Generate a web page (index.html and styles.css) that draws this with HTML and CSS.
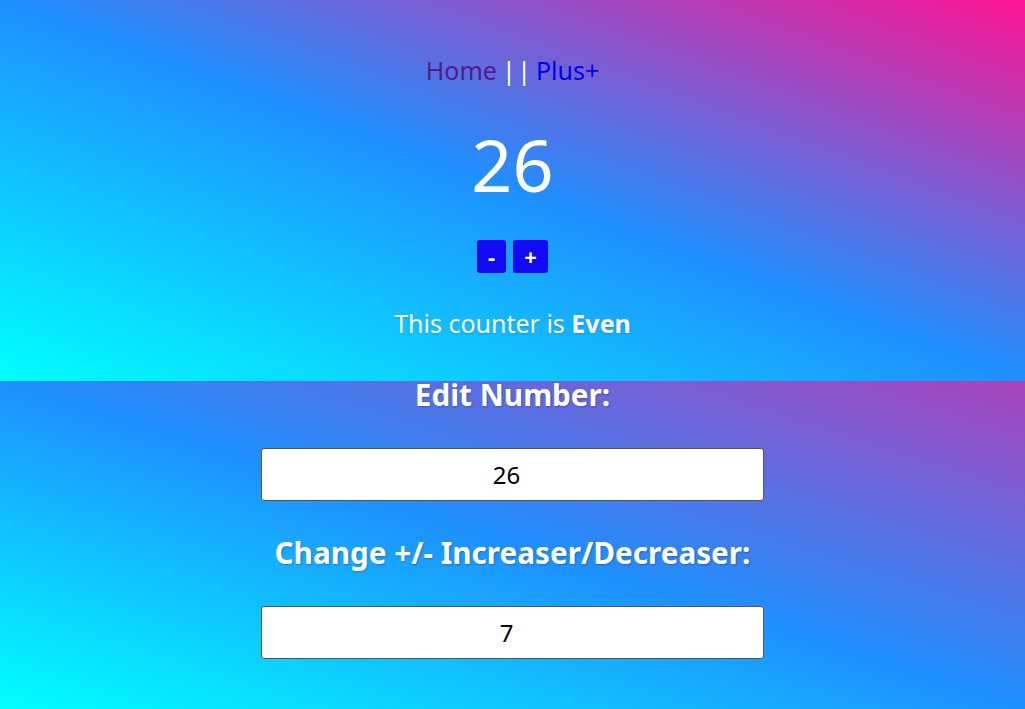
FILE: index.html
```html
<!DOCTYPE html>
<html lang="en">
<head>
<meta charset="utf-8">
<title>Counter</title>
<link rel="stylesheet" href="styles.css">
</head>
<body>
  <div class="app">
    <nav class="nav">
      <a class="nav-link visited" href="#">Home</a>
      <span class="sep"><span>|</span><span>|</span></span>
      <a class="nav-link" href="#">Plus+</a>
    </nav>
    <div class="count">26</div>
    <div class="buttons">
      <button class="btn minus">-</button>
      <button class="btn plus">+</button>
    </div>
    <p class="parity">This counter is <b>Even</b></p>
    <h2 class="label">Edit Number:</h2>
    <input class="field" type="text" value="26">
    <h2 class="label label-second">Change +/- Increaser/Decreaser:</h2>
    <input class="field" type="text" value="7">
  </div>
</body>
</html>
```

FILE: styles.css
```css
html, body {
  margin: 0;
  padding: 0;
}

body {
  height: 709px;
  font-family: "Noto Sans", "Open Sans", sans-serif;
  color: #ffffff;
  background-color: #1e90ff;
  background-image:
    linear-gradient(to top right, #00ffff 0%, #1e90ff 50%, #ff1493 100%),
    linear-gradient(to top right, #00ffff 0%, #1e90ff 50%, #ff1493 130%);
  background-repeat: no-repeat, no-repeat;
  background-size: 100% 381px, 100% 328px;
  background-position: 0 0, 0 381px;
}

.app {
  display: flex;
  flex-direction: column;
  align-items: center;
  padding-top: 54px;
}

.nav {
  font-size: 25px;
  line-height: 32px;
  height: 32px;
  display: flex;
  gap: 5px;
}

.nav-link {
  color: #0000ee;
  text-decoration: none;
}

.nav-link.visited {
  color: #551a8b;
}

.sep {
  display: flex;
  gap: 1.5px;
  color: #ffffff;
}

.count {
  margin-top: 30px;
  font-size: 72px;
  line-height: 96px;
  height: 96px;
}

.buttons {
  margin-top: 28px;
  display: flex;
  gap: 7px;
}

.btn {
  height: 33px;
  padding: 0;
  border: none;
  border-radius: 3px;
  background: #1409f5;
  color: #ffffff;
  font-family: "Noto Sans", sans-serif;
  font-weight: 700;
  font-size: 22px;
  line-height: 33px;
}

.minus {
  width: 29px;
}

.plus {
  width: 35px;
}

.parity {
  margin: 34px 0 0;
  font-size: 25px;
  line-height: 32px;
  text-shadow: 0 1px 2px rgba(0, 0, 0, 0.15);
}

.label {
  margin: 37px 0 0;
  font-size: 29.7px;
  line-height: 38px;
  font-weight: 700;
  text-shadow: 1px 1px 2px rgba(0, 0, 0, 0.25);
}

.label-second {
  margin-top: 33px;
}

.field {
  box-sizing: border-box;
  width: 503px;
  height: 53px;
  margin-top: 34px;
  border: 1px solid #555555;
  border-radius: 3px;
  background: #ffffff;
  color: #000000;
  text-align: center;
  font-family: "Noto Sans", sans-serif;
  font-size: 24px;
  padding: 0 12px 0 0;
}
```
